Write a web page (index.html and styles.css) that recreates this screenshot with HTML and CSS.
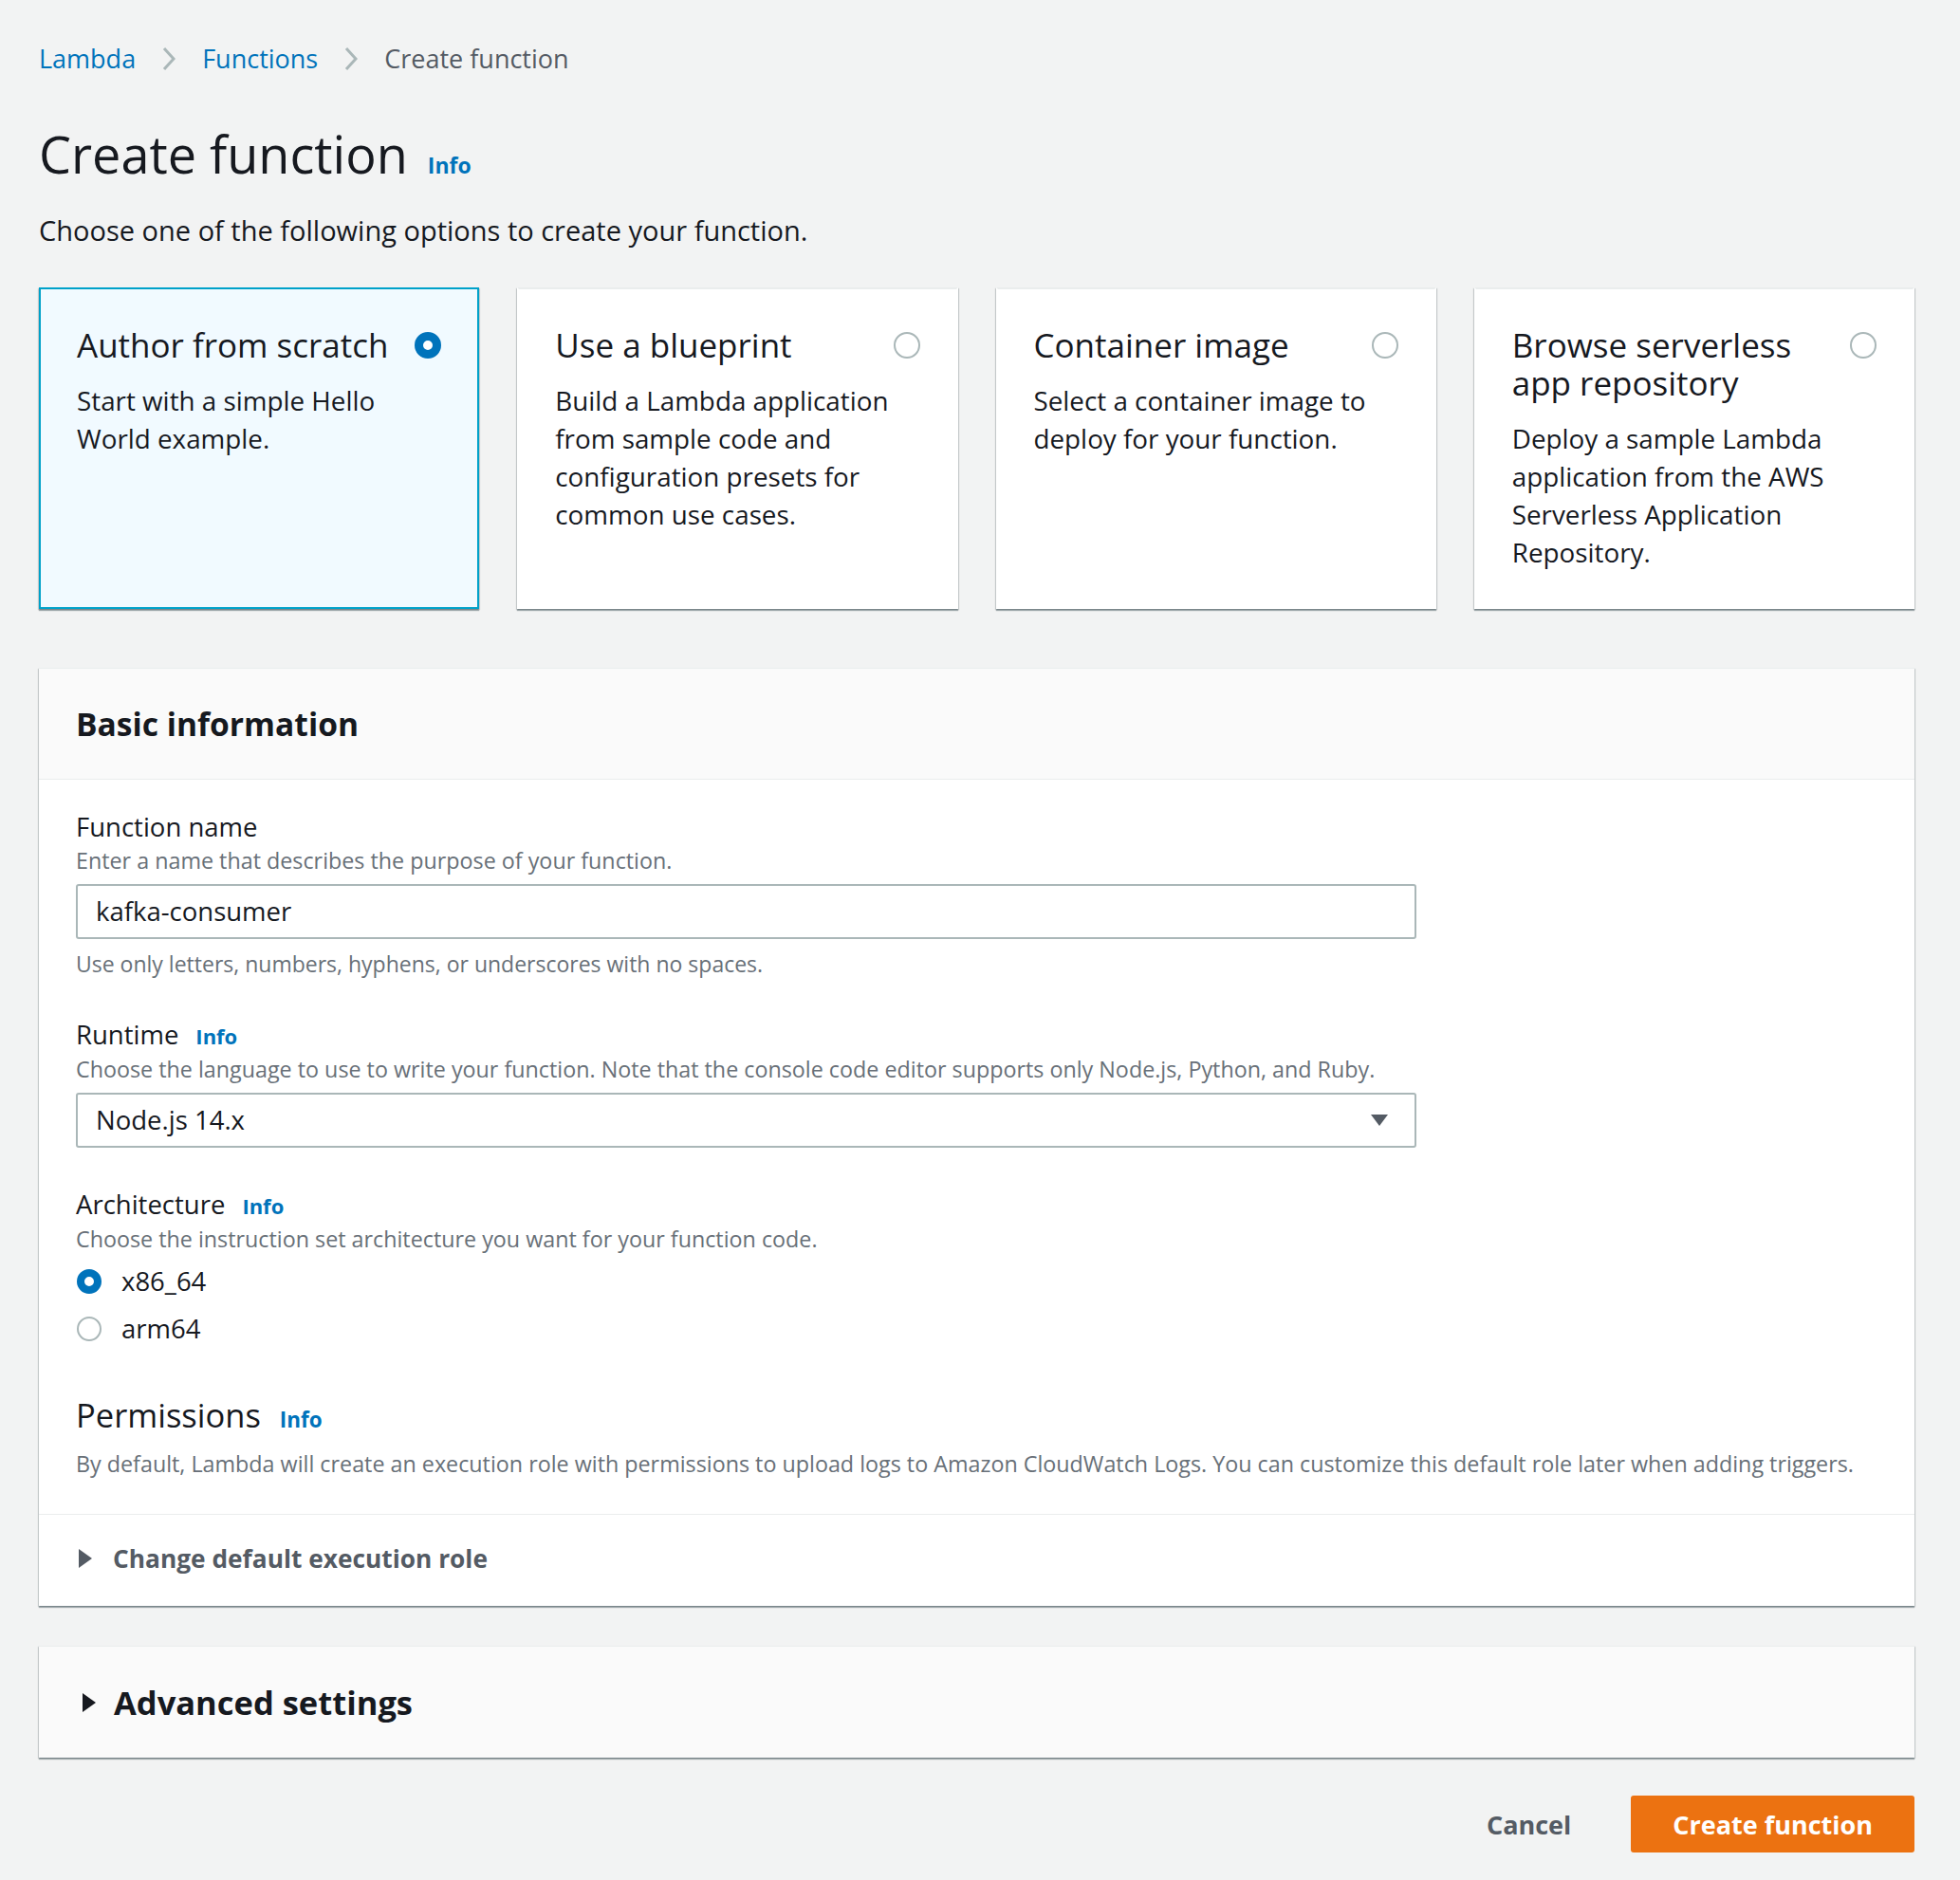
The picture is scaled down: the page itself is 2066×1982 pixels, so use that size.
FILE: index.html
```html
<!DOCTYPE html>
<html lang="en">
<head>
<meta charset="utf-8">
<title>Create function</title>
<link rel="stylesheet" href="styles.css">
</head>
<body>
<div class="page">
  <nav class="crumbs">
    <a class="link">Lambda</a>
    <svg class="chev" width="14" height="26" viewBox="0 0 14 26"><polyline points="2,2 12,13 2,24" fill="none" stroke="#aab7b8" stroke-width="3"/></svg>
    <a class="link">Functions</a>
    <svg class="chev" width="14" height="26" viewBox="0 0 14 26"><polyline points="2,2 12,13 2,24" fill="none" stroke="#aab7b8" stroke-width="3"/></svg>
    <span class="current">Create function</span>
  </nav>

  <div class="title-row">
    <h1>Create function</h1>
    <a class="info">Info</a>
  </div>
  <p class="intro">Choose one of the following options to create your function.</p>

  <div class="tiles">
    <div class="tile selected">
      <div class="tile-head"><h3>Author from scratch</h3><span class="radio on"></span></div>
      <p>Start with a simple Hello World example.</p>
    </div>
    <div class="tile">
      <div class="tile-head"><h3>Use a blueprint</h3><span class="radio"></span></div>
      <p>Build a Lambda application from sample code and configuration presets for common use cases.</p>
    </div>
    <div class="tile">
      <div class="tile-head"><h3>Container image</h3><span class="radio"></span></div>
      <p>Select a container image to deploy for your function.</p>
    </div>
    <div class="tile">
      <div class="tile-head"><h3>Browse serverless app repository</h3><span class="radio"></span></div>
      <p>Deploy a sample Lambda application from the AWS Serverless Application Repository.</p>
    </div>
  </div>

  <section class="panel">
    <header class="panel-head"><h2>Basic information</h2></header>
    <div class="panel-body">
      <div class="field">
        <div class="label">Function name</div>
        <div class="desc">Enter a name that describes the purpose of your function.</div>
        <div class="input">kafka-consumer</div>
        <div class="hint">Use only letters, numbers, hyphens, or underscores with no spaces.</div>
      </div>
      <div class="field">
        <div class="label">Runtime <a class="info">Info</a></div>
        <div class="desc">Choose the language to use to write your function. Note that the console code editor supports only Node.js, Python, and Ruby.</div>
        <div class="input select">Node.js 14.x
          <svg class="caret" width="20" height="14" viewBox="0 0 20 14"><polygon points="1,1 19,1 10,13" fill="#545b64"/></svg>
        </div>
      </div>
      <div class="field">
        <div class="label">Architecture <a class="info">Info</a></div>
        <div class="desc">Choose the instruction set architecture you want for your function code.</div>
        <div class="radios">
          <div class="opt"><span class="radio on small"></span>x86_64</div>
          <div class="opt"><span class="radio small"></span>arm64</div>
        </div>
      </div>
      <div class="field perms">
        <div class="sub-title">Permissions <a class="info">Info</a></div>
        <div class="desc perm-desc">By default, Lambda will create an execution role with permissions to upload logs to Amazon CloudWatch Logs. You can customize this default role later when adding triggers.</div>
      </div>
    </div>
    <div class="panel-foot">
      <svg class="tri" width="16" height="22" viewBox="0 0 16 22"><polygon points="1,1 15,11 1,21" fill="#545b64"/></svg>
      <span class="expander">Change default execution role</span>
    </div>
  </section>

  <section class="panel adv">
    <svg class="tri" width="16" height="22" viewBox="0 0 16 22"><polygon points="1,1 15,11 1,21" fill="#16191f"/></svg>
    <h2>Advanced settings</h2>
  </section>

  <div class="actions">
    <button class="cancel">Cancel</button>
    <button class="primary">Create function</button>
  </div>
</div>
</body>
</html>
```

FILE: styles.css
```css
* { box-sizing: border-box; }
html, body { margin: 0; padding: 0; }
body {
  background: #f2f3f3;
  color: #16191f;
  font-family: "Open Sans", "Noto Sans", sans-serif;
  font-size: 27.5px;
  line-height: 40px;
}
.page { padding: 42px 48px 0 41px; height: 1982px; }

.crumbs { display: flex; align-items: center; height: 40px; gap: 28px; font-size: 27px; }
.link { color: #0073bb; }
.current { color: #545b64; }
.chev { display: block; }

.title-row { display: flex; align-items: baseline; margin-top: 50px; gap: 21px; }
h1 { margin: 0; font-size: 54px; line-height: 60px; font-weight: 400; }
.info { color: #0073bb; font-weight: 700; font-size: 22px; }
.title-row .info { font-size: 23px; }

.intro { margin: 29px 0 0; font-size: 29px; }

.tiles {
  display: grid;
  grid-template-columns: repeat(4, 1fr);
  gap: 40px;
  margin-top: 40px;
}
.tile {
  background: #fff;
  min-height: 339px;
  padding: 39px 38px 30px 38px;
  border: 2px solid transparent;
  border-top-color: #eaeded;
  box-shadow: 0 2px 1px 0 rgba(0,28,36,.3), 1px 1px 1px 0 rgba(0,28,36,.15), -1px 1px 1px 0 rgba(0,28,36,.15);
}
.tile.selected { background: #f1faff; border-color: #00a1c9; }
.tile-head { display: flex; justify-content: space-between; align-items: flex-start; gap: 24px; }
.tile h3 { margin: 0; font-size: 35px; line-height: 40px; font-weight: 400; }
.tile p { margin: 18px 0 0; font-size: 27.8px; }

.radio {
  flex: none;
  display: block;
  width: 28px; height: 28px;
  margin-top: 6px;
  border-radius: 50%;
  border: 2px solid #aab7b8;
  background: #fff;
}
.radio.on { border: 9px solid #0073bb; }
.radio.small { width: 26px; height: 26px; margin-top: 0; }
.radio.small.on { border-width: 8px; }

.panel {
  background: #fff;
  margin-top: 62px;
  border-top: 1px solid #eaeded;
  box-shadow: 0 2px 1px 0 rgba(0,28,36,.3), 1px 1px 1px 0 rgba(0,28,36,.15), -1px 1px 1px 0 rgba(0,28,36,.15);
}
.panel-head {
  background: #fafafa;
  padding: 38px 39px 38px;
  border-bottom: 1px solid #eaeded;
}
h2 { margin: 0; font-size: 33.6px; line-height: 40px; font-weight: 700; }
.panel-body { padding: 30px 39px 38px; }
.field + .field { margin-top: 40px; }
.label { display: flex; align-items: baseline; gap: 18px; }
.desc, .hint { color: #687078; font-size: 23.3px; line-height: 30px; }
.hint { font-size: 23px; }
.input {
  margin-top: 10px;
  width: 1413px;
  height: 58px;
  border: 2px solid #aab7b8;
  border-radius: 3px;
  padding: 0 19px;
  display: flex;
  align-items: center;
  justify-content: space-between;
}
.hint { margin-top: 11px; }
.caret { margin-right: 8px; }

.radios { margin-top: 10px; display: flex; flex-direction: column; gap: 10px; }
.opt { display: flex; align-items: center; gap: 21px; height: 40px; padding-left: 1px; }

.perms { margin-top: 51px !important; }
.sub-title { display: flex; align-items: baseline; gap: 20px; font-size: 34.5px; }
.sub-title .info { font-size: 22.5px; }
.perm-desc { margin-top: 11px; }

.panel-foot {
  border-top: 1px solid #eaeded;
  padding: 26px 39px 30px;
  display: flex; align-items: center; gap: 21px;
}
.panel-foot .tri { margin-left: 2px; }
.tri { display: block; }
.expander { color: #545b64; font-weight: 700; font-size: 26.3px; }

.adv {
  margin-top: 42px;
  background: #fafafa;
  padding: 39px 39px 38px 45px;
  display: flex; align-items: center; gap: 18px;
}
.adv h2 { font-size: 34.5px; }

.actions { display: flex; justify-content: flex-end; align-items: center; gap: 63px; margin-top: 40px; }
button { font-family: inherit; font-size: 27px; font-weight: 700; cursor: pointer; }
.cancel { background: none; border: 0; padding: 0; color: #545b64; }
.primary {
  background: #ec7211;
  color: #fff;
  border: 0;
  border-radius: 3px;
  height: 60px;
  padding: 0 44px;
}
```
